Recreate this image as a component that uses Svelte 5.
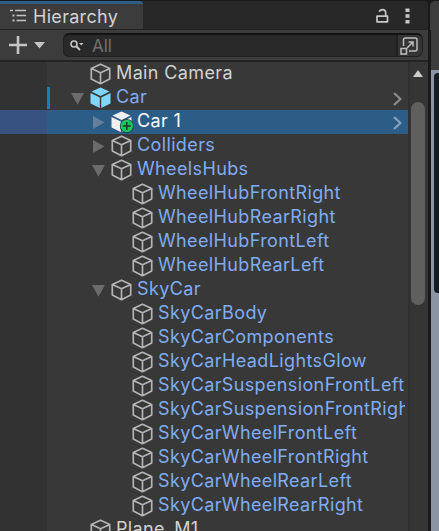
<script>
  const rows = [
    { name: 'Main Camera', depth: 0, plain: true },
    { name: 'Car', depth: 0, fold: 'open', icon: 'prefab', more: true, changed: true },
    { name: 'Car 1', depth: 1, fold: 'closed', icon: 'added', more: true, selected: true },
    { name: 'Colliders', depth: 1, fold: 'closed' },
    { name: 'WheelsHubs', depth: 1, fold: 'open' },
    { name: 'WheelHubFrontRight', depth: 2 },
    { name: 'WheelHubRearRight', depth: 2 },
    { name: 'WheelHubFrontLeft', depth: 2 },
    { name: 'WheelHubRearLeft', depth: 2 },
    { name: 'SkyCar', depth: 1, fold: 'open' },
    { name: 'SkyCarBody', depth: 2 },
    { name: 'SkyCarComponents', depth: 2 },
    { name: 'SkyCarHeadLightsGlow', depth: 2 },
    { name: 'SkyCarSuspensionFrontLeft', depth: 2 },
    { name: 'SkyCarSuspensionFrontRight', depth: 2 },
    { name: 'SkyCarWheelFrontLeft', depth: 2 },
    { name: 'SkyCarWheelFrontRight', depth: 2 },
    { name: 'SkyCarWheelRearLeft', depth: 2 },
    { name: 'SkyCarWheelRearRight', depth: 2 },
    { name: 'Plane_M1', depth: 0, plain: true },
  ];
</script>

<div class="editor">
  <section class="panel">
    <header class="tabs">
      <div class="tab">
        <svg width="17" height="14" viewBox="0 0 17 14">
          <path d="M0 1.500h3M5 1.500h11M6.500 6.500h9.500M6.500 11.500h9.500" stroke="#c2c2c2" stroke-width="1.500" fill="none" />
          <path d="M2.500 5.500h2v2h-2zM2.500 10.500h2v2h-2z" fill="#c2c2c2" />
        </svg>
        <span>Hierarchy</span>
      </div>
      <div class="tools">
        <svg width="13" height="16" viewBox="0 0 13 16">
          <path d="M1 8.200h10.500v5.600H1zM9.700 8V4.500Q9.700 1.700 6.500 1.700 4 1.700 3.300 3.800" stroke="#c8c8c8" stroke-width="1.700" fill="none" stroke-linejoin="round" />
        </svg>
        <svg width="5" height="16" viewBox="0 0 5 16">
          <path d="M.5.500h4v3.500h-4zM.5 6.200h4v3.500h-4zM.5 12h4v3.500h-4z" fill="#c8c8c8" />
        </svg>
      </div>
    </header>
    <div class="toolbar">
      <svg class="plus" width="36" height="18" viewBox="0 0 36 18">
        <path d="M9 0v18M0 9h18" stroke="#c4c4c4" stroke-width="2.600" />
        <path d="M25 6h11l-5.500 6.500z" fill="#c4c4c4" />
      </svg>
      <div class="search">
        <div class="field">
          <svg width="14" height="12" viewBox="0 0 14 12">
            <circle cx="4" cy="4" r="3" fill="none" stroke="#c4c4c4" stroke-width="1.600" />
            <path d="M6 6l4 4" stroke="#c4c4c4" stroke-width="2" />
            <path d="M9 3h4.500l-2.250 2.500z" fill="#c4c4c4" />
          </svg>
          <span>All</span>
        </div>
        <div class="expand">
          <svg width="18" height="18" viewBox="0 0 18 18" fill="none" stroke="#bdbdbd" stroke-width="1.500">
            <path d="M3.500 9V3Q3.500 1 5.500 1H15Q17 1 17 3v9q0 2-2 2H9M1 11.500h5.500V17H1zM7 11l6-6M8.500 5H13v4.500" />
          </svg>
        </div>
      </div>
    </div>
    <div class="body">
      <div class="tree">
        {#each rows as row}
          <div class="row" class:selected={row.selected} class:plain={row.plain}>
            <div class="gutter"></div>
            <div class="stripe" class:changed={row.changed}></div>
            <div class="item" style:padding-left="{21 + row.depth * 21}px">
              <div class="fold">
                {#if row.fold === 'open'}
                  <svg width="13" height="12" viewBox="0 0 13 12"><path d="M0 0h13L6.500 11.700z" fill="#6b6b6b" /></svg>
                {:else if row.fold === 'closed'}
                  <svg width="13" height="13" viewBox="0 0 13 13"><path d="M1 0v13L12.500 6.500z" fill={row.selected ? '#657f9a' : '#6b6b6b'} /></svg>
                {/if}
              </div>
              <svg width="24" height="22" viewBox="0 0 24 22">
                {#if row.icon}
                  <g fill={row.icon === 'prefab' ? '#7fd6fd' : '#f0f0f0'}>
                    <path d="M10.500.5L19.500 4.600 10.500 8.900 1.500 4.600zM.5 6l9.300 4.400V21L.5 16.500zM20.500 6l-9.300 4.400V21l9.300-4.500z" />
                  </g>
                  {#if row.icon === 'added'}
                    <circle cx="15.800" cy="15" r="7" fill="#273c4b" />
                    <circle cx="15.800" cy="15" r="6.200" fill="#14c75f" />
                    <path d="M15.800 11v8M11.800 15h8" stroke="#16392b" stroke-width="1.500" />
                  {/if}
                {:else}
                  <path d="M10.500 1.200L19.700 5.400v10.700l-9.200 4.600-9.200-4.600V5.400zM1.300 5.400l9.200 4.300 9.200-4.300M10.500 9.700v11" fill="none" stroke="#b4b4b4" stroke-width="1.700" stroke-linejoin="round" />
                {/if}
              </svg>
              <span class="name">{row.name}</span>
            </div>
            {#if row.more}
              <svg class="more" width="9" height="14" viewBox="0 0 9 14">
                <path d="M1 1l6.500 6L1 13" fill="none" stroke={row.selected ? '#84a3be' : '#8c8c8c'} stroke-width="2.200" />
              </svg>
            {/if}
          </div>
        {/each}
      </div>
      <div class="scroll">
        <svg width="10" height="7" viewBox="0 0 10 7"><path d="M0 7h10L5 0z" fill="#cccccc" /></svg>
        <div class="thumb"></div>
      </div>
    </div>
  </section>
  <aside class="scene">
    <div class="scene-tab"></div>
    <div class="scene-bar"></div>
    <div class="view"><div class="overlay"></div></div>
  </aside>
</div>

<style>
  :global(body) { background: #191919; }
  * { box-sizing: border-box; }
  svg { display: block; flex: none; }
  .editor {
    display: flex;
    width: 439px;
    height: 531px;
    overflow: hidden;
    background: #191919;
    font-family: Inter, sans-serif;
    font-size: 18px;
    color: #d2d2d2;
  }
  .panel { width: 428px; display: flex; flex-direction: column; flex: none; }
  .tabs {
    height: 30px;
    display: flex;
    justify-content: space-between;
    background: #282828;
    border-top: 1px solid #191919;
    border-bottom: 1px solid #232323;
    border-top-right-radius: 4px;
  }
  .tab {
    width: 143px;
    display: flex;
    align-items: center;
    gap: 6px;
    padding: 0 0 0 10px;
    background: #3c3c3c;
    border-top: 3px solid #2c5d87;
    border-top-right-radius: 3px;
    letter-spacing: 0.3px;
  }
  .tab svg { margin-top: -2px; }
  .tools { display: flex; gap: 16px; padding: 7px 18px 0 0; }
  .toolbar {
    height: 32px;
    display: flex;
    align-items: center;
    background: #3c3c3c;
    border-bottom: 2px solid #232323;
    padding: 0 5px 0 9px;
  }
  .search {
    margin-left: 18px;
    width: 360px;
    height: 24px;
    display: flex;
    border: 1px solid #202020;
    border-top: 2px solid #121212;
    border-radius: 6px;
    background: #292929;
    overflow: hidden;
  }
  .field { flex: 1; display: flex; align-items: center; gap: 8px; padding-left: 6px; color: #717171; font-size: 17px; }
  .expand {
    width: 26px;
    display: flex;
    align-items: center;
    justify-content: center;
    padding-right: 2px;
    background: #353535;
    border-left: 2px solid #202020;
  }
  .body { height: 469px; display: flex; overflow: hidden; }
  .tree { width: 408px; background: #383838; overflow: hidden; }
  .row { height: 24px; display: flex; align-items: center; color: #7fadf3; }
  .plain { color: #d2d2d2; }
  .gutter { width: 47px; height: 24px; flex: none; background: #323232; }
  .stripe { width: 3px; height: 22px; flex: none; }
  .changed { background: #0f81be; }
  .item { width: 355px; height: 24px; display: flex; align-items: center; flex: none; overflow: hidden; }
  .fold { width: 19px; flex: none; padding-top: 1px; }
  .name { letter-spacing: 0.37px; white-space: nowrap; line-height: 24px; margin: -2px 0 0 2px; }
  .selected { background: #2c5d87; color: #fff; }
  .selected .gutter { background: #37527f; }
  .more { margin: 2px 0 0 -12px; }
  .scroll {
    width: 20px;
    display: flex;
    flex-direction: column;
    align-items: center;
    background: #353535;
    border-left: 2px solid #303030;
    padding: 8px 2px 0 0;
  }
  .thumb { width: 14px; height: 203px; margin-top: 25px; border-radius: 7px; background: #5f5f5f; flex: none; }
  .scene { width: 11px; display: flex; flex-direction: column; padding-left: 2px; }
  .scene-tab { height: 29px; margin-top: 1px; background: #3c3c3c; border-top-left-radius: 5px; }
  .scene-bar { height: 40px; background: #3c3c3c; margin-left: 1px; }
  .view { flex: 1; margin-left: 1px; padding: 3px 0 0 3px; background: #8a94a3; }
  .overlay { height: 220px; background: #171a20; border-radius: 4px 0 0 4px; }
</style>
